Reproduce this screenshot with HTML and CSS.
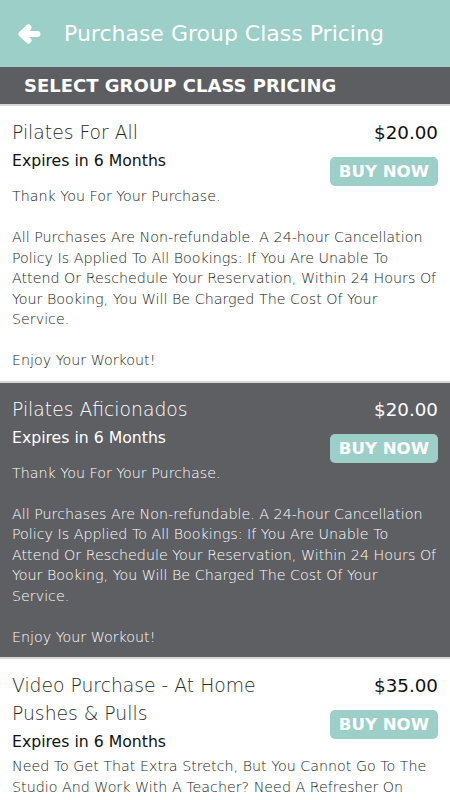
FILE: index.html
```html
<!DOCTYPE html>
<html lang="en">
<head>
<meta charset="utf-8">
<title>Purchase Group Class Pricing</title>
<link rel="stylesheet" href="styles.css">
</head>
<body>
<header class="topbar">
  <span class="back" aria-label="Back">
    <svg width="24" height="20" viewBox="0 0 24 20"><path d="M20.5 10H5M11.5 3.5L4.5 10L11.5 16.5" fill="none" stroke="#fff" stroke-width="6" stroke-linecap="round" stroke-linejoin="round"/></svg>
  </span>
  <h1 class="topbar-title">Purchase Group Class Pricing</h1>
</header>
<div class="section-bar">SELECT GROUP CLASS PRICING</div>
<main class="list">
  <section class="card">
    <div class="card-head">
      <div class="card-left">
        <div class="card-title">Pilates For All</div>
        <div class="card-expires">Expires in 6 Months</div>
      </div>
      <div class="card-right">
        <div class="card-price">$20.00</div>
        <button class="buy">BUY NOW</button>
      </div>
    </div>
    <p class="card-desc">Thank You For Your Purchase.<br><br>All Purchases Are Non-refundable. A 24-hour Cancellation Policy Is Applied To All Bookings: If You Are Unable To Attend Or Reschedule Your Reservation, Within 24 Hours Of Your Booking, You Will Be Charged The Cost Of Your Service.<br><br>Enjoy Your Workout!</p>
  </section>
  <section class="card card-dark">
    <div class="card-head">
      <div class="card-left">
        <div class="card-title">Pilates Aficionados</div>
        <div class="card-expires">Expires in 6 Months</div>
      </div>
      <div class="card-right">
        <div class="card-price">$20.00</div>
        <button class="buy">BUY NOW</button>
      </div>
    </div>
    <p class="card-desc">Thank You For Your Purchase.<br><br>All Purchases Are Non-refundable. A 24-hour Cancellation Policy Is Applied To All Bookings: If You Are Unable To Attend Or Reschedule Your Reservation, Within 24 Hours Of Your Booking, You Will Be Charged The Cost Of Your Service.<br><br>Enjoy Your Workout!</p>
  </section>
  <section class="card">
    <div class="card-head">
      <div class="card-left">
        <div class="card-title">Video Purchase - At Home Pushes &amp; Pulls</div>
        <div class="card-expires">Expires in 6 Months</div>
      </div>
      <div class="card-right">
        <div class="card-price">$35.00</div>
        <button class="buy">BUY NOW</button>
      </div>
    </div>
    <p class="card-desc">Need To Get That Extra Stretch, But You Cannot Go To The Studio And Work With A Teacher? Need A Refresher On Your Form? This Video Will Guide You Through A Full Session Of Pushes And Pulls From Home.</p>
  </section>
</main>
</body>
</html>
```
FILE: styles.css
```css
* { box-sizing: border-box; }
html, body { margin: 0; padding: 0; }
body {
  font-family: "DejaVu Sans", "Open Sans", sans-serif;
  background: #fff;
  color: #333;
}
.topbar {
  height: 67px;
  background: #9bcfc8;
  display: flex;
  align-items: center;
  padding-left: 17px;
}
.back { display: flex; width: 24px; height: 20px; }
.topbar-title {
  margin: 0 0 0 23px;
  font-size: 22px;
  font-weight: 400;
  color: #fff;
  line-height: 1;
  white-space: nowrap;
}
.section-bar {
  height: 39px;
  background: #5d5e62;
  color: #fff;
  font-weight: 700;
  font-size: 18px;
  line-height: 37px;
  padding-left: 24px;
  border-bottom: 2px solid #d6d6d6;
  white-space: nowrap;
}
.card {
  padding: 13px 12px 10px;
  border-bottom: 2px solid #d6d6d6;
  background: #fff;
  color: #333;
}
.card-dark { background: #5e5f63; color: #fff; }
.card-head {
  display: flex;
  justify-content: space-between;
  align-items: flex-start;
  gap: 12px;
}
.card-left { flex: 1; min-width: 0; }
.card-title {
  font-size: 18.75px;
  font-weight: 300;
  line-height: 28px;
  color: #2a2a2a;
}
.card-dark .card-title { color: #fff; }
.card-expires {
  font-size: 15.7px;
  line-height: 28px;
  color: #111;
}
.card-dark .card-expires { color: #fff; }
.card-right {
  display: flex;
  flex-direction: column;
  align-items: flex-end;
  flex-shrink: 0;
}
.card-price {
  font-size: 18.3px;
  line-height: 28px;
  color: #111;
}
.card-dark .card-price { color: #fff; }
.buy {
  margin-top: 10px;
  height: 29px;
  padding: 0 9px;
  border: 0;
  border-radius: 5px;
  background: #9bcfc8;
  color: #fff;
  font-family: inherit;
  font-size: 16.6px;
  font-weight: 700;
  line-height: 29px;
  white-space: nowrap;
}
.card-desc {
  margin: 0;
  font-size: 14.28px;
  font-weight: 300;
  line-height: 20.5px;
  color: #222;
}
.card-dark .card-desc { color: #fff; }
```
